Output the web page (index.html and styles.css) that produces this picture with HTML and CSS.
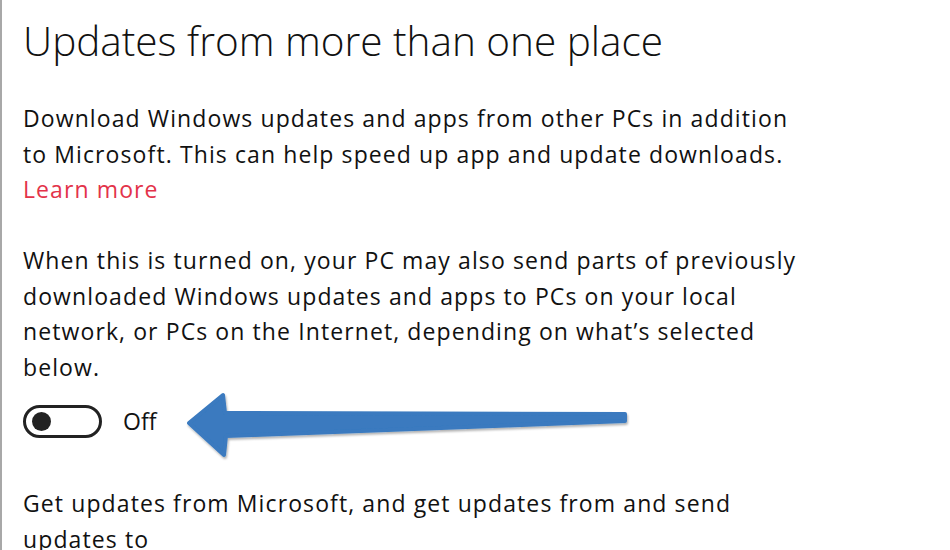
FILE: index.html
```html
<!DOCTYPE html>
<html lang="en">
<head>
  <meta charset="UTF-8">
  <meta name="viewport" content="width=device-width, initial-scale=1.0">
  <title>Delivery Optimization</title>
  <link rel="stylesheet" href="styles.css">
</head>
<body>
  <div class="page">
    <h1 class="title">Updates from more than one place</h1>

    <p class="text intro">
      Download Windows updates and apps from other PCs in addition to Microsoft. This can help speed up app and update downloads.
      <a class="link" href="#">Learn more</a>
    </p>

    <p class="text note">
      When this is turned on, your PC may also send parts of previously downloaded Windows updates and apps to PCs on your local network, or PCs on the Internet, depending on what&rsquo;s selected below.
    </p>

    <!-- Toggle with the annotation arrow pointing at it -->
    <div class="toggle-row">
      <span class="toggle"><span class="knob"></span></span>
      <span class="toggle-label">Off</span>
      <svg class="arrow" width="460" height="80" viewBox="0 0 460 80">
        <defs>
          <filter id="shade" x="-5%" y="-20%" width="110%" height="150%">
            <feDropShadow dx="1" dy="2" stdDeviation="1.2" flood-color="#000" flood-opacity="0.3"/>
          </filter>
        </defs>
        <path filter="url(#shade)" fill="#3a7abf" stroke="#3a7abf" stroke-width="4" stroke-linejoin="round"
          d="M9 37 L43 9 L45 27 L445 28 L445 35 L46 50 L44 69 Z"/>
      </svg>
    </div>

    <p class="text">
      Get updates from Microsoft, and get updates from and send updates to
    </p>
  </div>
</body>
</html>
```

FILE: styles.css
```css
html, body {
  margin: 0;
  background: #fff;
}
body {
  font-family: "Open Sans", "Noto Sans", Arial, sans-serif;
  color: #111;
}
.page {
  min-height: 550px;
  box-sizing: border-box;
  border-left: 2px solid #a8a8a8;
  padding: 13px 0 0 21px;
}
.title {
  font-size: 40.5px;
  font-weight: 300;
  line-height: 56px;
  margin: 0 0 32px;
  color: #111;
}
.text {
  font-size: 23px;
  letter-spacing: 1.1px;
  line-height: 35.5px;
  max-width: 785px;
  margin: 0;
}
.intro {
  margin-bottom: 35.5px;
}
.note {
  margin-bottom: 19px;
}
.link {
  display: block;
  color: #e3334a;
  text-decoration: none;
}
.toggle-row {
  position: relative;
  display: flex;
  align-items: center;
  gap: 21px;
  height: 34px;
  margin: 0 0 48px;
}
.toggle {
  display: flex;
  align-items: center;
  box-sizing: border-box;
  width: 79px;
  height: 33px;
  border: 3px solid #222;
  border-radius: 17px;
  padding-left: 6px;
}
.knob {
  width: 19px;
  height: 19px;
  border-radius: 50%;
  background: #222;
}
.toggle-label {
  font-size: 23px;
}
.arrow {
  position: absolute;
  left: 157px;
  top: -18px;
}
```
